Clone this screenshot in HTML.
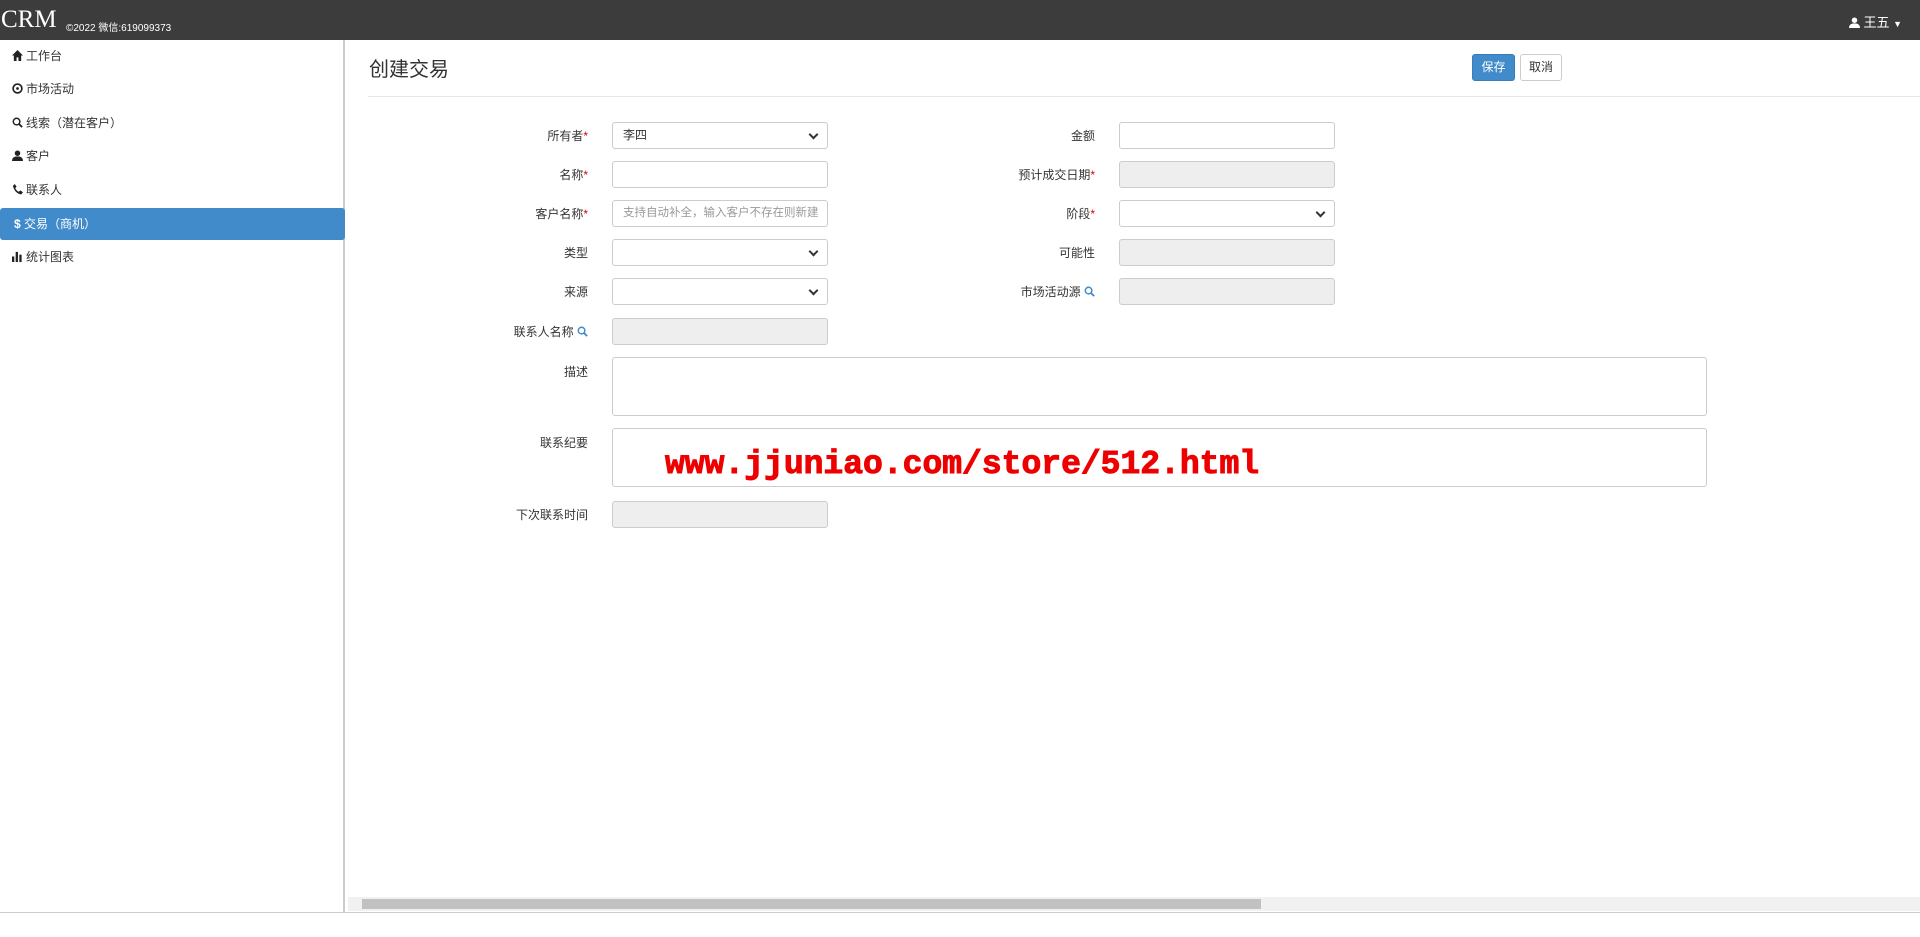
<!DOCTYPE html>
<html><head><meta charset="utf-8">
<style>
*{box-sizing:border-box;margin:0;padding:0}
body{width:1920px;height:937px;overflow:hidden;background:#fff;font-family:"Liberation Sans","Microsoft YaHei","Noto Sans CJK SC",sans-serif;font-size:12px;color:#333;position:relative}
.top{position:absolute;left:0;top:0;width:1920px;height:40px;background:#3c3c3c;color:#fff}
.logo{position:absolute;left:1px;top:6px;font-family:"Liberation Serif",serif;font-size:25px}
.copy{position:absolute;left:66px;top:19px;font-size:10px}
.user{position:absolute;right:18px;top:12px;font-size:13px}
.side{position:absolute;left:0;top:40px;width:345px;height:872px;border-right:2px solid #ccc}
.mi{position:absolute;left:0;width:345px;height:32px;line-height:32px;padding-left:12px;font-size:12px}
.mi svg{vertical-align:-1px;margin-right:3px}
.mi.act{background:#428bca;color:#fff;border-radius:3px;padding-left:14px}
.title{position:absolute;left:369px;top:53px;font-size:20px;color:#333}
.hr{position:absolute;left:368px;right:0;top:96px;border-top:1px solid #e6e6e6}
.btn{position:absolute;top:54px;height:27px;line-height:25px;font-size:12px;text-align:center;border-radius:3px;border:1px solid #ccc;background:#fff}
.lbl{position:absolute;text-align:right;font-size:12px;color:#333;width:200px}
.lbl i{color:#d00;font-style:normal}
.lbl svg{vertical-align:-1px}
.in{position:absolute;height:27px;border:1px solid #ccc;border-radius:3px;background:#fff;font-size:12px;line-height:25px;padding-left:10px;overflow:hidden;white-space:nowrap}
.in.g{background:#eee}
.in.s:after{content:"";position:absolute;right:10px;top:8px;width:5px;height:5px;border-right:2px solid #333;border-bottom:2px solid #333;transform:rotate(45deg)}
.ta{position:absolute;left:612px;width:1095px;height:59px;border:1px solid #ccc;border-radius:3px}
.wm{position:absolute;left:665px;top:446px;font-family:"Liberation Mono",monospace;font-weight:bold;font-size:33px;color:#e00;-webkit-text-stroke:1px #e00;text-shadow:1px 1px 0 #fff,-1px -1px 0 #fff,1px -1px 0 #fff,-1px 1px 0 #fff;white-space:nowrap}
.sb{position:absolute;left:348px;top:897px;width:1572px;height:14px;background:#f1f1f1}
.th{position:absolute;left:14px;top:2px;width:899px;height:10px;background:#c1c1c1}
.bl{position:absolute;left:0;top:912px;width:1920px;border-top:1px solid #ccc}
</style></head><body>
<div class="top"><span class="logo">CRM</span><span class="copy">©2022 微信:619099373</span><span class="user"><svg width="11" height="11" viewBox="0 0 12 12" style="vertical-align:-1px"><circle cx="6" cy="3.5" r="3" fill="#fff"/><path d="M0 12 Q0 7 6 7 Q12 7 12 12Z" fill="#fff"/></svg> 王五 <span style="font-size:9px">▼</span></span></div>
<div class="side">
<div class="mi" style="top:0"><svg width="11" height="11" viewBox="0 0 12 12"><path d="M6 0 L12 6 H10 V12 H7 V8 H5 V12 H2 V6 H0Z" fill="#222"/></svg>工作台</div>
<div class="mi" style="top:33px"><svg width="11" height="11" viewBox="0 0 12 12"><circle cx="6" cy="6" r="4.8" fill="none" stroke="#222" stroke-width="1.8"/><circle cx="6" cy="6" r="1.5" fill="#222"/></svg>市场活动</div>
<div class="mi" style="top:67px"><svg width="11" height="11" viewBox="0 0 12 12"><circle cx="5" cy="5" r="3.6" fill="none" stroke="#222" stroke-width="1.6"/><path d="M7.5 7.5 L11 11" stroke="#222" stroke-width="2"/></svg>线索（潜在客户）</div>
<div class="mi" style="top:100px"><svg width="11" height="11" viewBox="0 0 12 12"><circle cx="6" cy="3.5" r="3" fill="#222"/><path d="M0 12 Q0 7 6 7 Q12 7 12 12Z" fill="#222"/></svg>客户</div>
<div class="mi" style="top:134px"><svg width="11" height="11" viewBox="0 0 12 12"><path d="M1 2 L3 0 L5 3 L3.5 4.5 Q5 7.5 7.5 8.5 L9 7 L12 9 L10 11.5 Q3 10 1 2Z" fill="#222"/></svg>联系人</div>
<div class="mi act" style="top:168px"><b>$</b> 交易（商机）</div>
<div class="mi" style="top:201px"><svg width="11" height="11" viewBox="0 0 12 12"><rect x="0" y="6" width="2.5" height="6" fill="#222"/><rect x="4" y="1" width="2.5" height="11" fill="#222"/><rect x="8" y="4" width="2.5" height="8" fill="#222"/></svg>统计图表</div>
</div>
<div class="title">创建交易</div>
<div class="btn" style="left:1472px;width:43px;background:#428bca;border-color:#357ebd;color:#fff">保存</div>
<div class="btn" style="left:1520px;width:42px">取消</div>
<div class="hr"></div>

<div class="lbl" style="left:388px;top:127px">所有者<i>*</i></div>
<div class="in s" style="left:612px;top:122px;width:216px">李四</div>
<div class="lbl" style="left:388px;top:166px">名称<i>*</i></div>
<div class="in" style="left:612px;top:161px;width:216px"></div>
<div class="lbl" style="left:388px;top:205px">客户名称<i>*</i></div>
<div class="in" style="left:612px;top:200px;width:216px;color:#999;font-size:11.5px">支持自动补全，输入客户不存在则新建</div>
<div class="lbl" style="left:388px;top:244px">类型</div>
<div class="in s" style="left:612px;top:239px;width:216px"></div>
<div class="lbl" style="left:388px;top:283px">来源</div>
<div class="in s" style="left:612px;top:278px;width:216px"></div>
<div class="lbl" style="left:388px;top:323px">联系人名称 <svg width="11" height="11" viewBox="0 0 12 12"><circle cx="5" cy="5" r="3.6" fill="none" stroke="#428bca" stroke-width="1.6"/><path d="M7.5 7.5 L11 11" stroke="#428bca" stroke-width="2"/></svg></div>
<div class="in g" style="left:612px;top:318px;width:216px"></div>

<div class="lbl" style="left:895px;top:127px">金额</div>
<div class="in" style="left:1119px;top:122px;width:216px"></div>
<div class="lbl" style="left:895px;top:166px">预计成交日期<i>*</i></div>
<div class="in g" style="left:1119px;top:161px;width:216px"></div>
<div class="lbl" style="left:895px;top:205px">阶段<i>*</i></div>
<div class="in s" style="left:1119px;top:200px;width:216px"></div>
<div class="lbl" style="left:895px;top:244px">可能性</div>
<div class="in g" style="left:1119px;top:239px;width:216px"></div>
<div class="lbl" style="left:895px;top:283px">市场活动源 <svg width="11" height="11" viewBox="0 0 12 12"><circle cx="5" cy="5" r="3.6" fill="none" stroke="#428bca" stroke-width="1.6"/><path d="M7.5 7.5 L11 11" stroke="#428bca" stroke-width="2"/></svg></div>
<div class="in g" style="left:1119px;top:278px;width:216px"></div>

<div class="lbl" style="left:388px;top:363px">描述</div>
<div class="ta" style="top:357px"></div>
<div class="lbl" style="left:388px;top:434px">联系纪要</div>
<div class="ta" style="top:428px"></div>
<div class="lbl" style="left:388px;top:506px">下次联系时间</div>
<div class="in g" style="left:612px;top:501px;width:216px"></div>

<div class="wm">www.jjuniao.com/store/512.html</div>
<div class="sb"><div class="th"></div></div>
<div class="bl"></div>
</body></html>
